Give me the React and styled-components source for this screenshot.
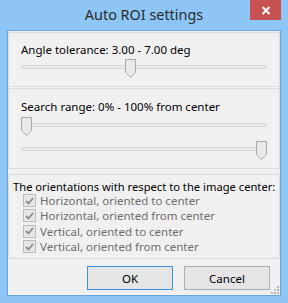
import React from 'react';
import styled, { createGlobalStyle } from 'styled-components';

const GlobalStyle = createGlobalStyle`
  html, body {
    margin: 0;
    padding: 0;
    background: #8dc5f5;
  }
  * {
    box-sizing: border-box;
  }
`;

const Window = styled.div`
  width: 288px;
  height: 303px;
  background: #8dc5f5;
  padding: 0 7px 7px 7px;
  display: flex;
  flex-direction: column;
  font-family: "Segoe UI", "Noto Sans", sans-serif;
`;

const TitleBar = styled.div`
  height: 30px;
  display: grid;
  grid-template-columns: 1fr auto 1fr;
  align-items: start;
`;

const Title = styled.div`
  font-size: 14.4px;
  color: #2b2b2b;
  line-height: 29px;
  white-space: nowrap;
`;

const CloseButton = styled.div`
  justify-self: end;
  width: 31px;
  height: 20px;
  background: #c75050;
  display: flex;
  align-items: center;
  justify-content: center;
`;

const Client = styled.div`
  flex: 1;
  border: 1px solid #6ba5d6;
  background: #f0f0f0;
  display: flex;
  flex-direction: column;
  padding-top: 1px;
`;

const Panel = styled.div`
  border: 1px solid #dcdcdc;
  height: ${(p) => p.$h}px;
  margin-top: ${(p) => p.$mt || 0}px;
  padding: ${(p) => p.$pad || '0 12px 0 12px'};
  display: flex;
  flex-direction: column;
`;

const Label = styled.div`
  font-size: ${(p) => p.$size || 11.5}px;
  line-height: 16px;
  color: #000;
  white-space: nowrap;
  margin-top: ${(p) => p.$mt || 0}px;
`;

const SliderRow = styled.div`
  position: relative;
  height: 18px;
  margin-top: ${(p) => p.$mt || 0}px;
`;

const Track = styled.div`
  position: absolute;
  left: 0;
  right: 0;
  top: 6px;
  height: 4px;
  border: 1px solid #d6d6d6;
  background: #e7eaea;
`;

const ThumbWrap = styled.div`
  position: absolute;
  top: 0;
  width: 11px;
  height: 19px;
`;

const ChecksList = styled.div`
  display: flex;
  flex-direction: column;
  padding-left: 10px;
  margin-top: -2px;
`;

const CheckRow = styled.div`
  display: flex;
  align-items: center;
  height: 15.33px;
  gap: 4px;
`;

const CheckBox = styled.div`
  width: 13px;
  height: 13px;
  border: 1px solid #bcbcbc;
  background: #e6e6e6;
  display: flex;
  align-items: center;
  justify-content: center;
`;

const CheckText = styled.span`
  font-size: 11.5px;
  color: #6d6d6d;
  line-height: 15px;
  white-space: nowrap;
`;

const ButtonRow = styled.div`
  display: flex;
  justify-content: flex-end;
  gap: 11px;
  padding: 0 10px 0 0;
  margin-top: 7px;
  position: relative;
  flex: 1;
`;

const Button = styled.div`
  width: 86px;
  height: 24px;
  border: 1px solid ${(p) => (p.$default ? '#3c93e6' : '#adadad')};
  background: #e5e5e5;
  font-size: 11.5px;
  color: #000;
  display: flex;
  align-items: center;
  justify-content: center;
`;

const Grip = styled.svg`
  position: absolute;
  right: 1px;
  bottom: 1px;
`;

function Thumb({ left }) {
  return (
    <ThumbWrap style={{ left }}>
      <svg width="11" height="19" viewBox="0 0 11 19">
        <path
          d="M0.5 0.5 H10.5 V13.5 L5.5 18.5 L0.5 13.5 Z"
          fill="#e8e8e8"
          stroke="#a9a9a9"
        />
      </svg>
    </ThumbWrap>
  );
}

function Slider({ left, mt }) {
  return (
    <SliderRow $mt={mt}>
      <Track />
      <Thumb left={left} />
    </SliderRow>
  );
}

function Check({ children }) {
  return (
    <CheckRow>
      <CheckBox>
        <svg width="9" height="8" viewBox="0 0 9 8">
          <path d="M1 4 L3.5 6.5 L8 1" fill="none" stroke="#8a8a8a" strokeWidth="1.8" />
        </svg>
      </CheckBox>
      <CheckText>{children}</CheckText>
    </CheckRow>
  );
}

export default function App() {
  return (
    <>
      <GlobalStyle />
      <Window>
        <TitleBar>
          <div />
          <Title>Auto ROI settings</Title>
          <CloseButton>
            <svg width="10" height="9" viewBox="0 0 10 9">
              <path d="M1.5 1 L8.5 8 M8.5 1 L1.5 8" stroke="#fff" strokeWidth="2" />
            </svg>
          </CloseButton>
        </TitleBar>
        <Client>
          <Panel $h={55}>
            <Label $mt={9}>Angle tolerance: 3.00 - 7.00 deg</Label>
            <Slider left={104} mt={1} />
          </Panel>
          <Panel $h={81} $mt={1}>
            <Label $mt={10}>Search range: 0% - 100% from center</Label>
            <Slider left={0} mt={2} />
            <Slider left={235} mt={6} />
          </Panel>
          <Panel $h={85} $mt={5} $pad="0 4px">
            <Label $mt={4} $size={11.2}>
              The orientations with respect to the image center:
            </Label>
            <ChecksList>
              <Check>Horizontal, oriented to center</Check>
              <Check>Horizontal, oriented from center</Check>
              <Check>Vertical, oriented to center</Check>
              <Check>Vertical, oriented from center</Check>
            </ChecksList>
          </Panel>
          <ButtonRow>
            <Button $default>OK</Button>
            <Button>Cancel</Button>
            <Grip width="8" height="8" viewBox="0 0 8 8">
              <rect x="6" y="0" width="2" height="2" fill="#b8b8b8" />
              <rect x="3" y="3" width="2" height="2" fill="#b8b8b8" />
              <rect x="6" y="3" width="2" height="2" fill="#b8b8b8" />
              <rect x="0" y="6" width="2" height="2" fill="#b8b8b8" />
              <rect x="3" y="6" width="2" height="2" fill="#b8b8b8" />
              <rect x="6" y="6" width="2" height="2" fill="#b8b8b8" />
            </Grip>
          </ButtonRow>
        </Client>
      </Window>
    </>
  );
}
